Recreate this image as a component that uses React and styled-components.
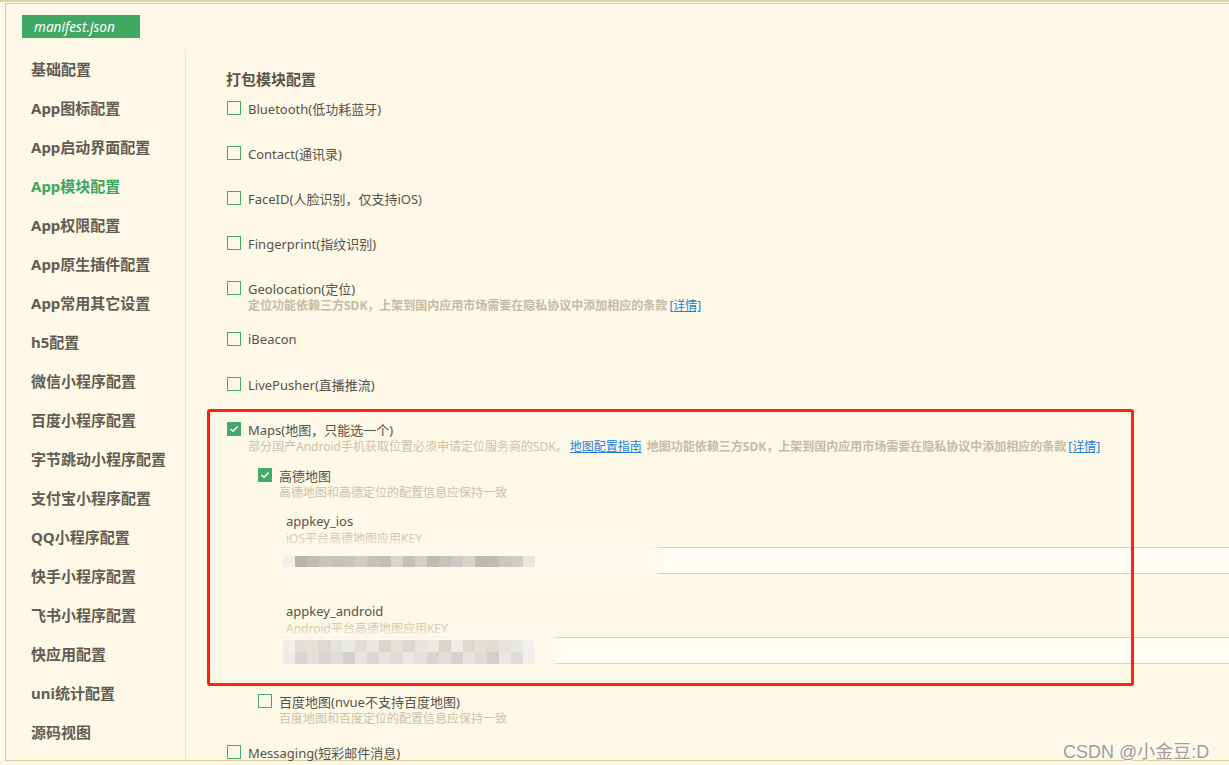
import React from "react";
import styled, { createGlobalStyle } from "styled-components";

const Global = createGlobalStyle`
  html, body { margin: 0; padding: 0; background: #fef8e6; }
  * { box-sizing: border-box; }
  body { font-family: "Noto Sans", "Noto Sans CJK SC", sans-serif; }
`;

const Page = styled.div`
  position: relative;
  width: 1229px;
  height: 765px;
  overflow: hidden;
  background: #fef8e6;
  border-top: 2px solid #e0d1a6;
`;

const Frame = styled.div`
  margin-top: 1px;
  margin-left: 5px;
  height: 758px;
  border-top: 1px solid #dccb9f;
  border-left: 1px solid #dccb9f;
  border-bottom: 1px solid #dccb9f;
  display: flex;
  flex-direction: column;
`;

const Header = styled.div`
  height: 46px;
  padding: 11px 0 0 16px;
  flex: none;
`;

const Tab = styled.div`
  width: 118px;
  height: 23px;
  line-height: 23px;
  padding-left: 12px;
  background: #3fa864;
  color: #fff;
  font-style: italic;
  font-size: 13.6px;
`;

const Body = styled.div`
  flex: 1;
  display: flex;
  min-height: 0;
`;

const Sidebar = styled.nav`
  width: 180px;
  flex: none;
  border-right: 1px solid #eee5cb;
`;

const NavItem = styled.div`
  height: 39px;
  line-height: 39px;
  padding-left: 25px;
  font-size: 15px;
  font-weight: 700;
  color: ${(p) => (p.$active ? "#3ca760" : "#625d52")};
`;

const Content = styled.main`
  flex: 1;
  padding: 19px 0 0 41px;
  min-width: 0;
`;

const Heading = styled.div`
  font-size: 15px;
  font-weight: 700;
  color: #5a564d;
  line-height: 20px;
  margin: 0 0 10px -1px;
`;

const Item = styled.div`
  min-height: 29px;
  margin-bottom: 16px;
`;

const Row = styled.label`
  display: flex;
  align-items: center;
  height: 18px;
  font-size: 13px;
  color: #57534b;
  white-space: nowrap;
`;

const Box = styled.span`
  width: 14px;
  height: 14px;
  flex: none;
  margin-right: 7px;
  border: 1px solid #45a96a;
  background: ${(p) => (p.$checked ? "#45a96a" : "transparent")};
  display: flex;
  align-items: center;
  justify-content: center;
`;

const Desc = styled.div`
  height: 17px;
  line-height: 17px;
  font-size: 12px;
  color: #cbc3ab;
  padding-left: ${(p) => p.$indent ?? 21}px;
  white-space: nowrap;
`;

const Strong = styled.span`
  font-weight: 700;
  color: #c4bca4;
`;

const Link = styled.a`
  color: #1f7fd8;
  text-decoration: underline;
  margin: 0 2px;
`;

const Sub = styled.div`
  margin-left: 31px;
  margin-top: ${(p) => p.$top ?? 11}px;
`;

const Field = styled.div`
  margin-left: 28px;
  margin-top: ${(p) => p.$top}px;
`;

const FieldLabel = styled.div`
  height: 18px;
  line-height: 18px;
  font-size: 13px;
  color: #57534b;
`;

const FieldDesc = styled.div`
  height: 17px;
  line-height: 17px;
  font-size: 12px;
  color: #d0c8b2;
`;

const Input = styled.div`
  position: relative;
  margin-left: -4px;
  height: 27px;
  background: #fffdf4;
  border-top: 1px solid #ddcfa4;
  border-bottom: 1px solid #ddcfa4;
`;

const Halo = styled.div`
  position: absolute;
  left: -4px;
  top: -5px;
  width: ${(p) => p.$w}px;
  height: 36px;
  background: #fdf9ec;
  filter: blur(3px);
  border-radius: 8px;
`;

const Pixels = styled.div`
  position: absolute;
  left: 1px;
  top: ${(p) => p.$top}px;
  display: grid;
  grid-template-columns: repeat(21, 12px);
  grid-auto-rows: ${(p) => p.$rowH}px;
`;

const Px = styled.span`
  background: ${(p) => p.$c};
`;

const RedBox = styled.div`
  position: absolute;
  left: 207px;
  top: 407px;
  width: 927px;
  height: 277px;
  border: 3px solid #ff2112;
  border-radius: 3px;
  pointer-events: none;
`;

const Watermark = styled.div`
  position: absolute;
  left: 1063px;
  top: 735px;
  font-family: "Liberation Sans", "Noto Sans CJK SC", sans-serif;
  font-size: 18px;
  color: #9e9e9e;
  text-shadow: 1px 1px 0 rgba(255, 255, 255, 0.8);
  white-space: nowrap;
`;

const Check = () => (
  <svg width="10" height="8" viewBox="0 0 10 8">
    <path d="M1.5 4 L4 6.3 L8.6 1.6" fill="none" stroke="#fff" strokeWidth="1.5" />
  </svg>
);

const Checkbox = ({ checked, children }) => (
  <Row>
    <Box $checked={checked}>{checked && <Check />}</Box>
    {children}
  </Row>
);

const nav = [
  "基础配置",
  "App图标配置",
  "App启动界面配置",
  "App模块配置",
  "App权限配置",
  "App原生插件配置",
  "App常用其它设置",
  "h5配置",
  "微信小程序配置",
  "百度小程序配置",
  "字节跳动小程序配置",
  "支付宝小程序配置",
  "QQ小程序配置",
  "快手小程序配置",
  "飞书小程序配置",
  "快应用配置",
  "uni统计配置",
  "源码视图",
];

const iosRow = [
  "#f3f0e8", "#b9b3ab", "#c1bbb2", "#c9c5bd", "#c5c2bc", "#cac4bc", "#d0cbc2",
  "#c6c1b9", "#c3bfb6", "#d7d5cd", "#c5c1b9", "#d3d0c8", "#c0bab1", "#c8c2b9",
  "#cacac5", "#d7d3c9", "#bfb9b0", "#c1bbb3", "#ccc7bf", "#d1cdc5", "#e9e6de",
];
const andRow1 = [
  "#f0eee8", "#e2dfd8", "#e4e1da", "#dcd9d2", "#e6e4de", "#ebe9e3", "#e0ddd6",
  "#e9e7e1", "#d9d6cf", "#e3e1da", "#dad7d0", "#e7e5df", "#ece9e3", "#d8d5ce",
  "#eeece6", "#dcd9d2", "#e3e0d9", "#e0ddd6", "#e6e3dc", "#e9e7e1", "#f3f1eb",
];
const andRow2 = [
  "#eeebe5", "#d8d5ce", "#e4e1da", "#d9d6cf", "#e0ddd6", "#d3d0c9", "#e7e4dd",
  "#dbd8d1", "#e5e3dc", "#dfdcd5", "#e9e7e1", "#e4e2db", "#dad7d0", "#e2dfd8",
  "#d6d3cc", "#e6e3dc", "#dedbd4", "#d2cfc8", "#eae8e2", "#dfdcd5", "#f1efe9",
];

export default function App() {
  return (
    <>
      <Global />
      <Page>
        <Frame>
          <Header>
            <Tab>manifest.json</Tab>
          </Header>
          <Body>
            <Sidebar>
              {nav.map((n) => (
                <NavItem key={n} $active={n === "App模块配置"}>
                  {n}
                </NavItem>
              ))}
            </Sidebar>
            <Content>
              <Heading>打包模块配置</Heading>
              <Item>
                <Checkbox>Bluetooth(低功耗蓝牙)</Checkbox>
              </Item>
              <Item>
                <Checkbox>Contact(通讯录)</Checkbox>
              </Item>
              <Item>
                <Checkbox>FaceID(人脸识别，仅支持iOS)</Checkbox>
              </Item>
              <Item>
                <Checkbox>Fingerprint(指纹识别)</Checkbox>
              </Item>
              <Item>
                <Checkbox>Geolocation(定位)</Checkbox>
                <Desc>
                  <Strong>定位功能依赖三方SDK，上架到国内应用市场需要在隐私协议中添加相应的条款</Strong>
                  <Link>[详情]</Link>
                </Desc>
              </Item>
              <Item>
                <Checkbox>iBeacon</Checkbox>
              </Item>
              <Item>
                <Checkbox>LivePusher(直播推流)</Checkbox>
              </Item>
              <Item>
                <Checkbox checked>Maps(地图，只能选一个)</Checkbox>
                <Desc>
                  部分国产Android手机获取位置必须申请定位服务商的SDK。
                  <Link>地图配置指南</Link>
                  {" "}
                  <Strong>地图功能依赖三方SDK，上架到国内应用市场需要在隐私协议中添加相应的条款</Strong>
                  <Link>[详情]</Link>
                </Desc>
                <Sub>
                  <Checkbox checked>高德地图</Checkbox>
                  <Desc>高德地图和高德定位的配置信息应保持一致</Desc>
                  <Field $top={11}>
                    <FieldLabel>appkey_ios</FieldLabel>
                    <FieldDesc>iOS平台高德地图应用KEY</FieldDesc>
                    <Input>
                      <Halo $w={380} />
                      <Pixels $top={8} $rowH={11}>
                        {iosRow.map((c, i) => (
                          <Px key={i} $c={c} />
                        ))}
                      </Pixels>
                    </Input>
                  </Field>
                  <Field $top={28}>
                    <FieldLabel>appkey_android</FieldLabel>
                    <FieldDesc>Android平台高德地图应用KEY</FieldDesc>
                    <Input>
                      <Halo $w={280} />
                      <Pixels $top={2} $rowH={12}>
                        {andRow1.concat(andRow2).map((c, i) => (
                          <Px key={i} $c={c} />
                        ))}
                      </Pixels>
                    </Input>
                  </Field>
                </Sub>
                <Sub $top={28}>
                  <Checkbox>百度地图(nvue不支持百度地图)</Checkbox>
                  <Desc>百度地图和百度定位的配置信息应保持一致</Desc>
                </Sub>
              </Item>
              <Item>
                <Checkbox>Messaging(短彩邮件消息)</Checkbox>
              </Item>
            </Content>
          </Body>
        </Frame>
        <RedBox />
        <Watermark>CSDN @小金豆:D</Watermark>
      </Page>
    </>
  );
}
